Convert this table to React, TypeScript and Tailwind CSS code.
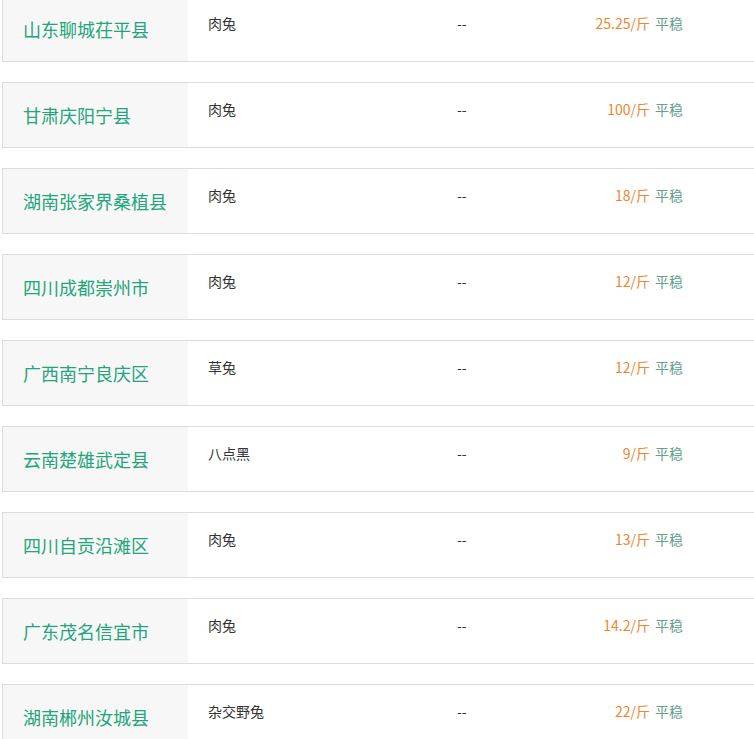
import React from "react";

const rows = [
  { city: "山东聊城茌平县", kind: "肉兔", price: "25.25/斤" },
  { city: "甘肃庆阳宁县", kind: "肉兔", price: "100/斤" },
  { city: "湖南张家界桑植县", kind: "肉兔", price: "18/斤" },
  { city: "四川成都崇州市", kind: "肉兔", price: "12/斤" },
  { city: "广西南宁良庆区", kind: "草兔", price: "12/斤" },
  { city: "云南楚雄武定县", kind: "八点黑", price: "9/斤" },
  { city: "四川自贡沿滩区", kind: "肉兔", price: "13/斤" },
  { city: "广东茂名信宜市", kind: "肉兔", price: "14.2/斤" },
  { city: "湖南郴州汝城县", kind: "杂交野兔", price: "22/斤" },
];

export default function App() {
  return (
    <div
      className="w-[754px] h-[739px] overflow-hidden bg-white"
      style={{ fontFamily: '"Noto Sans CJK SC", "Noto Sans", sans-serif' }}
    >
      <div className="mt-[-4px] flex flex-col gap-[20px] pl-[2px]">
        {rows.map((r, i) => (
          <div
            key={i}
            className="flex h-[66px] w-[820px] shrink-0 border border-[#dcdcdc] bg-white"
          >
            <div className="flex w-[185px] shrink-0 items-center bg-[#f7f7f7] pl-[20px] text-[18px] text-[#23a57c]">
              {r.city}
            </div>
            <div className="w-[250px] shrink-0 pl-[20px] pt-[17px] text-[14px] leading-[18px] text-[#333]">
              {r.kind}
            </div>
            <div className="w-[140px] shrink-0 pl-[19px] pt-[17px] text-[14px] leading-[18px] text-[#333]">
              --
            </div>
            <div className="flex shrink-0 pt-[17px] text-[14px] leading-[18px]">
              <span className="w-[72px] text-right text-[#ee8530]">{r.price}</span>
              <span className="ml-[5px] text-[#62a08b]">平稳</span>
            </div>
          </div>
        ))}
      </div>
    </div>
  );
}
